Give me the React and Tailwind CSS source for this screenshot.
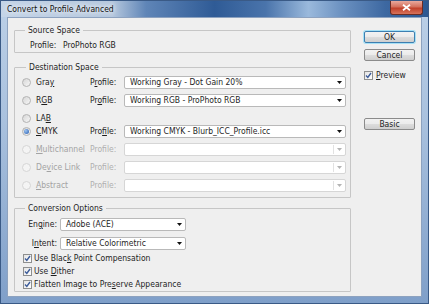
import React from 'react';

const FONT = "font-['DejaVu_Sans_Condensed','Liberation_Sans',sans-serif]";

function Arrow({ disabled }) {
  return (
    <svg width="5" height="3" viewBox="0 0 5 3">
      <path d="M0 0h5L2.5 3z" fill={disabled ? '#b4b4b4' : '#111'} />
    </svg>
  );
}

function Select({ value, disabled, className = '' }) {
  return (
    <div
      className={`flex items-center h-[13px] bg-white border rounded-[2px] ${
        disabled ? 'border-[#d6d6d6]' : 'border-[#b9b9b9]'
      } ${className}`}
    >
      <span className="flex-1 pl-[5px] truncate leading-[11px]">{value}</span>
      {disabled && <span className="w-px h-[9px] bg-[#e2e2e2]" />}
      <span className="w-[11px] flex justify-center">
        <Arrow disabled={disabled} />
      </span>
    </div>
  );
}

function Radio({ checked, disabled }) {
  return (
    <span
      className={`w-[9px] h-[9px] rounded-full border flex items-center justify-center ${
        disabled
          ? 'border-[#d5d5d5] bg-[#f4f4f4]'
          : 'border-[#b3b3b3] bg-[linear-gradient(135deg,#d6d6d6,#f7f7f7)]'
      }`}
    >
      {checked && (
        <span className="w-[5px] h-[5px] rounded-full bg-[radial-gradient(circle_at_35%_35%,#9cc3f0,#245ab0)]" />
      )}
    </span>
  );
}

function Check() {
  return (
    <span className="w-[9px] h-[9px] border border-[#8e8f8f] bg-[linear-gradient(135deg,#e4e4e4,#ffffff)] flex items-center justify-center">
      <svg width="7" height="7" viewBox="0 0 7 7">
        <path d="M1 3.6 L2.8 5.4 L6 1" stroke="#3c5c9a" strokeWidth="1.4" fill="none" />
      </svg>
    </span>
  );
}

function Button({ children, focused }) {
  return (
    <div
      className={`h-[12px] w-[51px] flex items-center justify-center rounded-[2px] border leading-[10px] bg-[linear-gradient(#f2f2f2,#ebebeb_50%,#dddddd_50%,#cfcfcf)] ${
        focused ? 'border-[#3c7fb1] shadow-[0_0_0_1px_#a6e0f5]' : 'border-[#8b8b8b]'
      }`}
    >
      {children}
    </div>
  );
}

function Group({ title, className = '', children }) {
  return (
    <fieldset className={`border border-[#c6c6c6] rounded-[1px] ${className}`}>
      <legend className="ml-[10px] px-[3px] leading-[10px]">{title}</legend>
      {children}
    </fieldset>
  );
}

function DestRow({ label, profile, value, checked, disabled, className = '' }) {
  return (
    <div className={`flex items-center h-[13px] ${className}`}>
      <span className="w-[20px] flex justify-center">
        <Radio checked={checked} disabled={disabled} />
      </span>
      <span className={`w-[54px] ${disabled ? 'text-[#a3a3a3]' : ''}`}>{label}</span>
      {profile !== undefined && (
        <>
          <span className={`w-[34px] ${disabled ? 'text-[#b0b0b0]' : ''}`}>{profile}</span>
          <Select value={value} disabled={disabled} className="w-[222px]" />
        </>
      )}
    </div>
  );
}

export default function App() {
  return (
    <div
      className={`w-[429px] h-[304px] flex flex-col overflow-hidden text-[8.5px] text-[#1e1e1e] bg-[linear-gradient(#bcd0e7,#a9c1de_40%,#7f9fc9)] border border-[#3a5a86] ${FONT}`}
    >
      <div className="h-[16px] flex items-center bg-[linear-gradient(90deg,#c4d4e7,#b6c8de_26%,#5f85b7_34%,#2f5b96_50%,#4a74ab_62%,#9ab9dc_72%,#6a90c0_80%,#3d68a1_90%,#2d5891)]">
        <span className="pl-[6px] flex-1 text-[8.5px] text-[#111] [text-shadow:0_0_4px_#fff,0_0_6px_#fff]">
          Convert to Profile Advanced
        </span>
        <div className="w-[33px] h-[14px] self-start mr-[5px] rounded-b-[3px] border border-t-0 border-[#6b2c24] bg-[linear-gradient(#e9a99d,#d4705c_45%,#c1402a_55%,#d7735b)] flex items-center justify-center">
          <svg width="9" height="7" viewBox="0 0 9 7">
            <path d="M1 0.8 L8 6.2 M8 0.8 L1 6.2" stroke="#fff" strokeWidth="1.8" />
          </svg>
        </div>
      </div>
      <div className="mx-[6px] mb-[6px] flex-1 bg-[#efefef] border border-[#8da2bf] flex pl-[6px] pr-[6px]">
        <div className="w-[338px]">
          <Group title="Source Space" className="mt-[7px] pb-[2px]">
            <div className="flex items-center h-[10px] mt-[5px] pl-[15px]">
              <span className="w-[33px]">Profile:</span>
              <span>ProPhoto RGB</span>
            </div>
          </Group>
          <Group title="Destination Space" className="mt-[9px] pb-[5px] pl-[1px]">
            <DestRow
              className="mt-[4px]"
              label={<>Gra<u>y</u></>}
              profile={<>P<u>r</u>ofile:</>}
              value="Working Gray - Dot Gain 20%"
            />
            <DestRow
              className="mt-[5px]"
              label={<>R<u>G</u>B</>}
              profile={<>Pr<u>o</u>file:</>}
              value="Working RGB - ProPhoto RGB"
            />
            <DestRow className="mt-[5px] !h-[12px]" label={<>LA<u>B</u></>} />
            <DestRow
              className="mt-[1px]"
              checked
              label={<><u>C</u>MYK</>}
              profile={<>Pro<u>f</u>ile:</>}
              value="Working CMYK - Blurb_ICC_Profile.icc"
            />
            <DestRow className="mt-[5px]" disabled label={<><u>M</u>ultichannel</>} profile="Profile:" value="" />
            <DestRow className="mt-[5px]" disabled label={<>De<u>v</u>ice Link</>} profile="Profile:" value="" />
            <DestRow className="mt-[5px]" disabled label={<><u>A</u>bstract</>} profile="Profile:" value="" />
          </Group>
          <Group title="Conversion Options" className="mt-[5px] pb-[1px]">
            <div className="flex items-center h-[13px] mt-[5px] pl-[7px]">
              <span className="w-[38px] text-right pr-[3px]">
                En<u>g</u>ine:
              </span>
              <Select value="Adobe (ACE)" className="w-[126px]" />
            </div>
            <div className="flex items-center h-[13px] mt-[6px] pl-[7px]">
              <span className="w-[38px] text-right pr-[3px]">
                I<u>n</u>tent:
              </span>
              <Select value="Relative Colorimetric" className="w-[126px]" />
            </div>
            <div className="flex items-center gap-[2px] h-[12px] mt-[2px] pl-[8px]">
              <Check />
              <span>
                Use Blac<u>k</u> Point Compensation
              </span>
            </div>
            <div className="flex items-center gap-[2px] h-[12px] mt-[1px] pl-[8px]">
              <Check />
              <span>
                Use <u>D</u>ither
              </span>
            </div>
            <div className="flex items-center gap-[2px] h-[12px] mt-[1px] pl-[8px]">
              <Check />
              <span>
                Flatten Image to Pre<u>s</u>erve Appearance
              </span>
            </div>
          </Group>
        </div>
        <div className="ml-[13px] w-[51px] flex flex-col">
          <div className="mt-[13px]">
            <Button focused>OK</Button>
          </div>
          <div className="mt-[6px]">
            <Button>Cancel</Button>
          </div>
          <div className="mt-[10px] flex items-center gap-[3px] h-[9px]">
            <Check />
            <span>
              <u>P</u>review
            </span>
          </div>
          <div className="mt-[38px]">
            <Button>Basic</Button>
          </div>
        </div>
      </div>
    </div>
  );
}
